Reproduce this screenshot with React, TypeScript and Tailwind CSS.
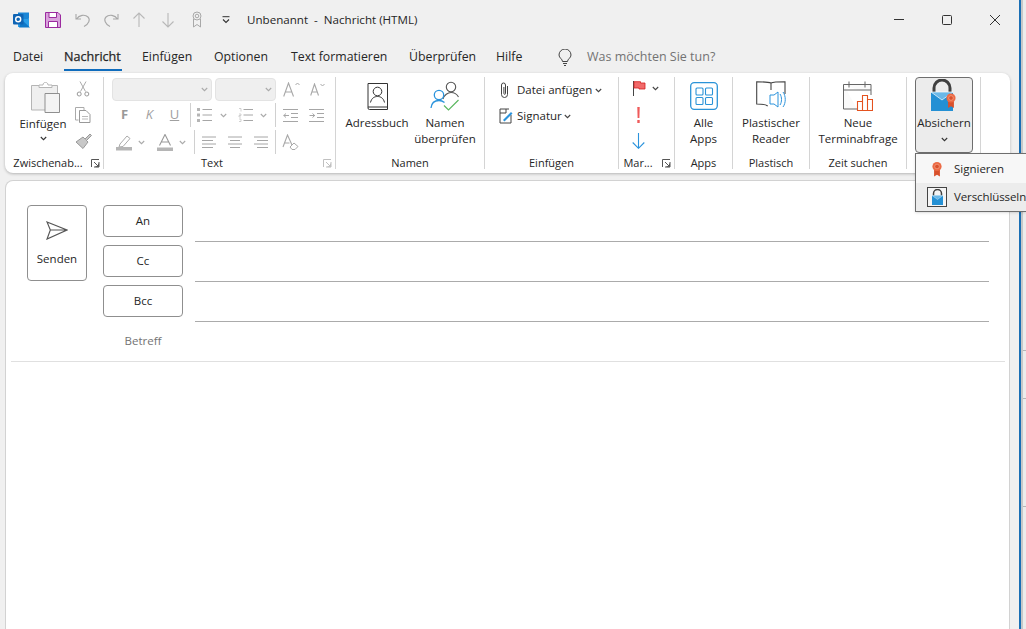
import React from "react";

const G = "#a6a6a6";
const Chev = ({ c = "#444", w = 7 }: { c?: string; w?: number }) => (
  <svg width={w} height="5" viewBox="0 0 7 5" className="shrink-0"><path d="M.8 1l2.700 2.700L6.200 1" fill="none" stroke={c} strokeWidth="1.100" /></svg>
);
const Launcher = ({ c = "#555" }: { c?: string }) => (
  <svg width="9" height="9" viewBox="0 0 9 9" className="shrink-0"><path d="M.5 8V.5H8M8 3v5H3M3 3l4.500 4.500M4.500 7.600h3v-3" fill="none" stroke={c} /></svg>
);
const Sep = ({ h = "h-[24px]" }: { h?: string }) => <div className={`w-px bg-[#d0d0d0] shrink-0 ${h}`} />;

function Outlook() {
  return (
    <svg width="17" height="17" viewBox="0 0 17 17">
      <path d="M5 1.500h11v6L11 12 5 8z" fill="#1a86d6" />
      <path d="M5 8h11v8H5z" fill="#2a9ee8" />
      <path d="M9 9l8 7.500H6z" fill="#0f78c8" />
      <rect x="0" y="3" width="10.500" height="10.500" rx="1" fill="#0f64b4" />
      <circle cx="5.200" cy="8.200" r="2.500" fill="none" stroke="#fff" strokeWidth="1.400" />
    </svg>
  );
}
function TitleIcons() {
  return (
    <div className="flex items-center">
      <div className="ml-[13px] w-[32px]"><Outlook /></div>
      <svg width="16" height="16" viewBox="0 0 16 16" className="mr-[14px]"><path d="M.5.5h12.500l2.500 2.500v12.500H.5z" fill="#d9a2dc" stroke="#9b2a9f" /><path d="M4 1v4.500h7.500V1M3.500 15v-5.500h9V15" fill="#fff" stroke="#9b2a9f" /></svg>
      <svg width="16" height="16" viewBox="0 0 16 16" className="mr-[12px]"><path d="M1 2v5h5M1.500 7C4 3 10 2 13 5c2.500 2.500 1 7-4 9.500" fill="none" stroke="#a8a8a8" strokeWidth="1.100" /></svg>
      <svg width="16" height="16" viewBox="0 0 16 16" className="mr-[13px]"><path d="M15 2v5h-5M14.500 7C12 3 6 2 3 5c-2.500 2.500-1 7 4 9.500" fill="none" stroke="#a8a8a8" strokeWidth="1.100" /></svg>
      <svg width="14" height="16" viewBox="0 0 14 16" className="mr-[15px]"><path d="M7 1v14M1.500 6.500L7 1l5.500 5.500" fill="none" stroke="#b8b8b8" strokeWidth="1.100" /></svg>
      <svg width="14" height="16" viewBox="0 0 14 16" className="mr-[16px]"><path d="M7 15V1M1.500 9.500L7 15l5.500-5.500" fill="none" stroke="#b8b8b8" strokeWidth="1.100" /></svg>
      <svg width="12" height="17" viewBox="0 0 12 17" className="mr-[19px]"><circle cx="6" cy="5" r="4" fill="none" stroke="#a8a8a8" /><circle cx="6" cy="5" r="1.800" fill="none" stroke="#a8a8a8" /><path d="M2.500 8v8L6 13.500 9.500 16V8" fill="none" stroke="#a8a8a8" /></svg>
      <svg width="8" height="8" viewBox="0 0 8 8" className="mr-[17px]"><path d="M.5.700h7" stroke="#333" /><path d="M1 3.500L4 6.500l3-3" fill="none" stroke="#333" strokeWidth="1.100" /></svg>
    </div>
  );
}
const Tab = ({ t, cls, active }: { t: string; cls: string; active?: boolean }) => (
  <div className={`h-[24px] leading-[22px] text-[12.3px] text-[#262626] whitespace-nowrap shrink-0 ${cls}`}>
    {active ? (
      <span className="relative inline-block w-[58px] h-[24px] text-[12.6px] [-webkit-text-stroke:0.25px_#262626]">
        {t}
        <span className="absolute left-0 right-0 bottom-[-1px] h-[2px] bg-[#0f6cbd]" />
      </span>
    ) : t}
  </div>
);
function Group({ w, label, launcher, children, border = true, lc, lab = "" }: { w: string; label: string; launcher?: boolean; children: React.ReactNode; border?: boolean; lc?: string; lab?: string }) {
  return (
    <div className={`${w} shrink-0 h-[92px] flex flex-col relative ${border ? "border-r border-[#d4d4d4]" : ""}`}>
      <div className="flex-1 min-h-0 flex">{children}</div>
      <div className={`h-[14px] leading-[14px] text-[11px] text-[#262626] text-center relative whitespace-nowrap mb-[-1px] ${lab}`}>
        {label}
        {launcher && <div className="absolute right-[3px] top-[3px] flex"><Launcher c={lc} /></div>}
      </div>
    </div>
  );
}
const Big = ({ icon, l1, l2, w }: { icon: React.ReactNode; l1: string; l2?: string; w: string }) => (
  <div className={`${w} flex flex-col items-center shrink-0`}>
    <div className="h-[35px] mt-[1px] flex items-center justify-center">{icon}</div>
    <div className="mt-[2px] text-[11.5px] leading-[16px] text-[#262626] text-center whitespace-nowrap">{l1}{l2 && <><br />{l2}</>}</div>
  </div>
);
const Lines = ({ a = "l" }: { a?: "l" | "c" | "r" }) => {
  const ys = [1, 4.5, 8, 11.5];
  const xs: [number, number][] = a === "l" ? [[0, 14], [0, 11], [0, 14], [0, 11]] : a === "c" ? [[0, 14], [2, 12], [0, 14], [2, 12]] : [[0, 14], [3, 14], [0, 14], [3, 14]];
  return <svg width="14" height="13" viewBox="0 0 14 13">{ys.map((y, i) => <path key={i} d={`M${xs[i][0]} ${y}H${xs[i][1]}`} stroke={G} />)}</svg>;
};
const Bullets = () => <svg width="15" height="14" viewBox="0 0 15 14"><path d="M0 0h3v3H0zM0 5.500h3v3H0zM0 11h3v3H0z" fill="#b5b5b5" /><path d="M5.500 1.500H15M5.500 7H15M5.500 12.500H15" stroke={G} /></svg>;
const Numbered = () => <svg width="15" height="14" viewBox="0 0 15 14"><path d="M1 .5h2v3M1 6h2v1.500H1V9h2M1 11h2v2.500H1" fill="none" stroke="#c0c0c0" strokeWidth=".7" /><path d="M5.500 1.500H15M5.500 7H15M5.500 12.500H15" stroke={G} /></svg>;
const Indent = ({ rev }: { rev?: boolean }) => (
  <svg width="15" height="13" viewBox="0 0 15 13"><path d="M0 .5h15M8 4.500h7M8 8.500h7M0 12.500h15" stroke={G} /><path d={rev ? "M6 6.500H.5m2.500-2l-2.200 2 2.200 2" : "M.5 6.500H6m-2.500-2l2.200 2-2.200 2"} fill="none" stroke={G} /></svg>
);
function Combo({ w }: { w: string }) {
  return <div className={`${w} h-[23px] rounded-[4px] bg-[#efefef] border border-[#e3e3e3] flex items-center justify-end pr-[3px] shrink-0`}><Chev c="#aaa" /></div>;
}
function TextGroup() {
  return (
    <div className="flex flex-col pt-[1px] pl-[8px]">
      <div className="flex items-center h-[23px]">
        <Combo w="w-[100px]" />
        <div className="w-[3px]" />
        <Combo w="w-[61px]" />
        <svg width="17" height="15" viewBox="0 0 17 15" className="ml-[7px]"><path d="M.7 14.500L5.500 1 10.500 14.500M2.500 10h6" fill="none" stroke="#a8a8a8" strokeWidth="1.100" /><path d="M12.500 3L14.500 1l2 2" fill="none" stroke="#a8a8a8" /></svg>
        <svg width="15" height="13" viewBox="0 0 15 13" className="ml-[10px]"><path d="M.7 12.500L4.500 1 8.500 12.500M2 9h5" fill="none" stroke="#a8a8a8" strokeWidth="1.100" /><path d="M10.500 1L12.500 3l2-2" fill="none" stroke="#a8a8a8" /></svg>
      </div>
      <div className="flex items-center h-[26px] mt-[1px]">
        <div className="w-[25px] text-center text-[13px] font-bold text-[#999]">F</div>
        <div className="w-[25px] text-center text-[13px] italic text-[#a0a0a0]">K</div>
        <div className="w-[25px] text-center text-[13px] text-[#a0a0a0] underline">U</div>
        <div className="w-[3px]" /><Sep />
        <div className="ml-[6px] w-[23px]"><Bullets /></div>
        <Chev c="#aaa" />
        <div className="ml-[11px] w-[22px]"><Numbered /></div>
        <Chev c="#aaa" />
        <div className="ml-[8px]"><Sep /></div>
        <div className="ml-[7px]"><Indent rev /></div>
        <div className="ml-[11px]"><Indent /></div>
      </div>
      <div className="flex items-center h-[24px] mt-[2px]">
        <svg width="16" height="17" viewBox="0 0 16 17" className="ml-[4px]"><path d="M4 10l7-8 3 2.500-7 8-4 .5z" fill="none" stroke="#aaa" /><path d="M0 13h16v3.500H0z" fill="#b5b5b5" /></svg>
        <div className="ml-[6px]"><Chev c="#aaa" /></div>
        <svg width="16" height="17" viewBox="0 0 16 17" className="ml-[12px]"><path d="M2.500 11.500L8 0.500 13.500 11.500M4.500 8h7" fill="none" stroke="#999" strokeWidth="1.100" /><path d="M0 13.500h16V17H0z" fill="#b5b5b5" /></svg>
        <div className="ml-[6px]"><Chev c="#aaa" /></div>
        <div className="ml-[8px]"><Sep /></div>
        <div className="ml-[7px]"><Lines a="l" /></div>
        <div className="ml-[12px]"><Lines a="c" /></div>
        <div className="ml-[12px]"><Lines a="r" /></div>
        <div className="ml-[7px]"><Sep /></div>
        <svg width="17" height="17" viewBox="0 0 17 17" className="ml-[6px]"><path d="M1 13L5.500 1 10 11M2.500 9h5" fill="none" stroke="#a8a8a8" strokeWidth="1.100" /><path d="M8 13l4-4 4 3.500-3 3h-3z" fill="none" stroke="#a8a8a8" /></svg>
      </div>
    </div>
  );
}
function Clipboard() {
  return (
    <div className="flex">
      <div className="w-[69px] flex flex-col items-center pt-[5px] pl-[7px] shrink-0">
        <svg width="29" height="31" viewBox="0 0 29 31" className="ml-[4px]"><path d="M.5 3.500h26V28H.5z" fill="#efefef" stroke="#b5b5b5" /><path d="M8 5.500V3h4c0-3.500 5-3.500 5 0h4v2.500z" fill="#fff" stroke="#b5b5b5" /><path d="M14 11.500h14.500V30.500H14z" fill="#f4f4f4" stroke="#8f8f8f" /></svg>
        <div className="mt-[3px] text-[11.5px] leading-[16px] text-[#262626]">Einfügen</div>
        <div className="mt-[4px]"><Chev c="#333" /></div>
      </div>
      <div className="flex flex-col items-center pt-[4px] w-[18px]">
        <svg width="14" height="16" viewBox="0 0 14 16"><path d="M4 .5l5.500 10M10 .5L4.500 10.500" stroke="#aaa" fill="none" /><circle cx="3.200" cy="13" r="2" fill="none" stroke="#999" /><circle cx="10.800" cy="13" r="2" fill="none" stroke="#999" /></svg>
        <svg width="16" height="16" viewBox="0 0 16 16" className="mt-[10px]"><path d="M3.500 13H.5V.5H9V3" fill="none" stroke="#aaa" /><path d="M4.500 3.500H11l4 4v8H4.500z" fill="#fff" stroke="#999" /><path d="M7 9.500h6M7 12h6" stroke="#bbb" /></svg>
        <svg width="17" height="16" viewBox="0 0 17 16" className="mt-[10px]"><path d="M1 9l7-5 5 5-5 6.500z" fill="#c8c8c8" stroke="#999" /><path d="M10 6l5-5 1.500 1.500-5 5" fill="#c8c8c8" stroke="#999" /></svg>
      </div>
    </div>
  );
}
const Lock = ({ h = 32 }: { h?: number }) => (
  <svg width={(h * 22) / 32} height={h} viewBox="0 0 22 32" className="shrink-0">
    <path d="M3 14V9a8 8 0 0 1 16 0v5" fill="none" stroke="#404040" strokeWidth="3" />
    <path d="M0 13h22v19H0z" fill="#2490d4" />
    <path d="M0 13l11 8 11-8z" fill="#6ab8e8" stroke="#fff" strokeWidth=".7" />
  </svg>
);
const Seal = ({ w = 11, h = 16 }: { w?: number; h?: number }) => (
  <svg width={w} height={h} viewBox="0 0 12 18" className="shrink-0"><path d="M2.500 8v10l3.500-2 3.500 2V8z" fill="#d9512c" /><circle cx="6" cy="6" r="5.500" fill="#ec6a44" /><circle cx="6" cy="6" r="2.800" fill="#d9512c" stroke="#f7a88d" strokeWidth=".8" /></svg>
);
function Ribbon() {
  return (
    <div className="mx-[5px] h-[100px] rounded-[8px] bg-white shadow-[0_1px_3px_rgba(0,0,0,0.25)] flex pt-[4px]">
      <Group w="w-[99px]" label="Zwischenab..." launcher lab="pr-[12px]"><Clipboard /></Group>
      <Group w="w-[232px]" label="Text" launcher lc="#c0c0c0" lab="pr-[15px]"><TextGroup /></Group>
      <Group w="w-[149px]" label="Namen">
        <div className="flex pl-[5px]">
          <Big w="w-[72px]" icon={
            <svg width="21" height="28" viewBox="0 0 21 28"><path d="M1 25V1.500h19.500v26H2.500A1.500 1.500 0 0 1 1 26V25h19.500" fill="none" stroke="#333" /><circle cx="10.500" cy="9.500" r="4.300" fill="none" stroke="#333" /><path d="M3.500 20.500c1-4.500 4-6 7-6s6 1.500 7 6" fill="none" stroke="#333" /></svg>
          } l1="Adressbuch" />
          <Big w="w-[64px]" icon={
            <svg width="30" height="30" viewBox="0 0 30 30"><circle cx="21" cy="6" r="4.700" fill="none" stroke="#555" strokeWidth="1.100" /><path d="M13 18c1-4 5-6.500 8-6.500s6 1.800 7.500 4.500" fill="none" stroke="#555" strokeWidth="1.100" /><circle cx="9" cy="14" r="4.700" fill="none" stroke="#2b93dc" strokeWidth="1.300" /><path d="M1 27c.5-5 4-7.500 8-7.500 2.500 0 4 .8 5.500 2" fill="none" stroke="#2b93dc" strokeWidth="1.300" /><path d="M14 24.500l4.500 4.500 10-10" fill="none" stroke="#5cb860" strokeWidth="1.200" /></svg>
          } l1="Namen" l2="überprüfen" />
        </div>
      </Group>
      <Group w="w-[134px]" label="Einfügen">
        <div className="flex flex-col pl-[14px] pt-[1px] text-[11.5px] text-[#262626]">
          <div className="flex items-center h-[24px]">
            <svg width="11" height="17" viewBox="0 0 11 17" className="mr-[7px]"><path d="M8.500 4v8.500a3 3 0 0 1-6 0V3a2 2 0 0 1 4 0v8.500a.8.8 0 0 1-1.600 0V5" fill="none" stroke="#444" /></svg>
            <span className="mr-[3px]">Datei anfügen</span><Chev />
          </div>
          <div className="flex items-center h-[24px] mt-[2px]">
            <svg width="14" height="16" viewBox="0 0 14 16" className="mr-[4px]"><path d="M10 1H1v14h11V7M7 1v4H1" fill="none" stroke="#444" /><path d="M4 12l8-8 1.500 1.500-8 8z" fill="#2b93dc" /></svg>
            <span className="mr-[2px]">Signatur</span><Chev />
          </div>
        </div>
      </Group>
      <Group w="w-[56px]" label="Mar..." launcher lab="pr-[17px]">
        <div className="flex flex-col pl-[14px] pt-[1px] items-start">
          <div className="flex items-center h-[20px]">
            <svg width="13" height="15" viewBox="0 0 13 15"><path d="M.5 0v15" stroke="#444" /><path d="M1 .7h6.500V2H12v6H6V7H1z" fill="#f16a6a" stroke="#d42020" strokeWidth=".8" /></svg>
            <div className="ml-[6px]"><Chev /></div>
          </div>
          <div className="h-[27px] mt-[3px] ml-[4px] flex items-center"><svg width="3" height="16" viewBox="0 0 3 16"><path d="M.3 0h2.400l-.3 11H.6zM.3 13h2.400v3H.3z" fill="#ef5a5a" /></svg></div>
          <div className="h-[26px] flex items-center ml-[-1px]"><svg width="13" height="16" viewBox="0 0 13 16"><path d="M6.500 0v15M.7 9.500l5.800 5.800 5.800-5.800" fill="none" stroke="#2b93dc" strokeWidth="1.100" /></svg></div>
        </div>
      </Group>
      <Group w="w-[58px]" label="Apps">
        <Big w="w-[57px]" icon={
          <svg width="28" height="28" viewBox="0 0 28 28"><rect x=".7" y=".7" width="26.600" height="26.600" rx="3.500" fill="none" stroke="#2a93d8" strokeWidth="1.300" /><rect x="6" y="6" width="7" height="7" rx="1" fill="none" stroke="#2a93d8" strokeWidth="1.100" /><rect x="15.500" y="6" width="7" height="7" rx="1" fill="none" stroke="#2a93d8" strokeWidth="1.100" /><rect x="6" y="15.500" width="7" height="7" rx="1" fill="none" stroke="#2a93d8" strokeWidth="1.100" /><rect x="15.500" y="15.500" width="7" height="7" rx="1" fill="none" stroke="#2a93d8" strokeWidth="1.100" /></svg>
        } l1="Alle" l2="Apps" />
      </Group>
      <Group w="w-[77px]" label="Plastisch">
        <Big w="w-[76px]" icon={
          <svg width="31" height="30" viewBox="0 0 31 30"><path d="M15 2C13 1 9 .8.7.8V23c5 0 9 .2 11 2M15 2c2-1 4-1.200 14-1.200V13M15 2v7" fill="none" stroke="#444" strokeWidth="1.100" /><path d="M14 14h4l4-3v15l-4-3h-4z" fill="#fff" stroke="#2b93dc" /><path d="M24 13c2 3 2 8 0 11M27 11c3 4 3 11 0 15" fill="none" stroke="#2b93dc" /></svg>
        } l1="Plastischer" l2="Reader" />
      </Group>
      <Group w="w-[97px]" label="Zeit suchen">
        <Big w="w-[96px]" icon={
          <svg width="30" height="30" viewBox="0 0 30 30"><path d="M.5 3.500h27.500V14M.5 3.500V28H14" fill="#fafafa" stroke="#666" /><path d="M.5 9h27.500M6 .5v6M22 .5v6" stroke="#666" /><path d="M14.500 29.500v-9H19.500v9zM19.500 29.500V14.500h5v15zM24.500 29.500v-11h5v11z" fill="#fff" stroke="#e4521f" strokeWidth="1.100" /></svg>
        } l1="Neue" l2="Terminabfrage" />
      </Group>
      <div className="w-[74px] h-[92px] shrink-0 border-r border-[#d4d4d4] pl-[8px]">
        <div className="w-[58px] h-[76px] rounded-[4px] bg-[#ececec] border border-[#6e6e6e] flex flex-col items-center">
          <div className="relative h-[33px] mt-[1px] w-[32px] flex justify-center pr-[5px]">
            <Lock />
            <div className="absolute left-[18px] top-[14px]"><Seal w={10} h={15} /></div>
          </div>
          <div className="text-[11.5px] leading-[16px] text-[#262626] mt-[3px]">Absichern</div>
          <div className="mt-[6px]"><Chev c="#333" /></div>
        </div>
      </div>
    </div>
  );
}
function SecureMenu() {
  return (
    <div className="absolute left-[915px] top-[153px] w-[111px] h-[59px] bg-[#f7f7f7] border border-[#6e6e6e] border-r-0 shadow-sm pt-[1px] text-[11.5px] text-[#262626] overflow-hidden">
      <div className="h-[28px] flex items-center pl-[16px]"><Seal w={10} h={16} /><span className="ml-[12px]">Signieren</span></div>
      <div className="h-[28px] flex items-center pl-[11px] bg-[#ececec]">
        <div className="w-[20px] h-[20px] border border-[#444] flex items-center justify-center bg-[#f5f5f5] shrink-0"><Lock h={16} /></div>
        <span className="ml-[7px] whitespace-nowrap tracking-[-0.1px]">Verschlüsseln</span>
      </div>
    </div>
  );
}
const AddrBtn = ({ t }: { t: string }) => (
  <div className="h-[32px] w-[80px] rounded-[4px] border border-[#8f8f8f] flex items-center justify-center text-[11.5px] text-[#262626]">{t}</div>
);
function Compose() {
  return (
    <div className="mx-[5px] mt-[7px] flex-1 rounded-t-[8px] bg-white border-t border-l border-r border-[#d2d2d2] pl-[5px] pr-[4px] flex flex-col">
      <div className="h-[181px] border-b border-[#e0e0e0] flex pt-[24px] pl-[16px] shrink-0">
        <div className="w-[60px] h-[76px] rounded-[4px] border border-[#8f8f8f] flex flex-col items-center shrink-0">
          <svg width="22" height="19" viewBox="0 0 23 20" className="mt-[15px]"><path d="M1 1l21 8.500L1 19l3.500-9.500zM4.500 9.500H22" fill="none" stroke="#555" strokeWidth="1.200" /></svg>
          <div className="mt-[11px] text-[11.5px] leading-[16px] text-[#262626]">Senden</div>
        </div>
        <div className="ml-[16px] w-[80px] flex flex-col gap-[8px] shrink-0">
          <AddrBtn t="An" /><AddrBtn t="Cc" /><AddrBtn t="Bcc" />
          <div className="text-[11.5px] leading-[16px] text-center text-[#737373] mt-[8px]">Betreff</div>
        </div>
        <div className="ml-[12px] w-[794px] flex flex-col shrink-0">
          <div className="h-[37px] border-b border-[#ababab]" />
          <div className="h-[40px] border-b border-[#ababab]" />
          <div className="h-[40px] border-b border-[#ababab]" />
        </div>
      </div>
    </div>
  );
}
export default function App() {
  return (
    <div className="w-[1026px] h-[629px] overflow-hidden flex relative bg-[#f0f0f0] [font-family:'Open_Sans','Noto_Sans',sans-serif]">
      <div className="w-[1021px] shrink-0 border-r-2 border-[#1a6fb5] flex flex-col pr-[4px]">
        <div className="h-[39px] flex items-center shrink-0">
          <TitleIcons />
          <div className="text-[11.6px] text-[#262626] whitespace-pre">Unbenannt  -  Nachricht (HTML)</div>
          <div className="ml-auto flex items-center pr-[15px]">
            <div className="w-[10px] h-px bg-[#333] mr-[38px]" />
            <div className="w-[10px] h-[10px] border border-[#333] rounded-[1.5px] mr-[38px]" />
            <svg width="10" height="10" viewBox="0 0 10 10"><path d="M0 0l10 10M10 0L0 10" stroke="#333" /></svg>
          </div>
        </div>
        <div className="h-[31px] pt-[7px] flex items-start shrink-0 pl-[13px]">
          <Tab t="Datei" cls="w-[51px]" />
          <Tab t="Nachricht" cls="w-[78px]" active />
          <Tab t="Einfügen" cls="w-[72px]" />
          <Tab t="Optionen" cls="w-[77px]" />
          <Tab t="Text formatieren" cls="w-[118px]" />
          <Tab t="Überprüfen" cls="w-[87px]" />
          <Tab t="Hilfe" cls="w-[62px]" />
          <svg width="14" height="17" viewBox="0 0 14 17" className="mr-[15px] mt-[3px] shrink-0"><path d="M4.500 12.500c0-2.500-3.500-3.500-3.500-6.500a6 6 0 0 1 12 0c0 3-3.500 4-3.500 6.500zM5 14.500h4M6 16.500h2" fill="none" stroke="#444" /></svg>
          <div className="text-[12.5px] leading-[22px] text-[#737373] whitespace-nowrap">Was möchten Sie tun?</div>
        </div>
        <div className="h-[3px] shrink-0" />
        <Ribbon />
        <Compose />
      </div>
      <div className="flex-1 flex flex-col bg-[#ececec] border-l-[2px] border-[#c8c8c8] w-[3px]">
        <div className="h-[351px] border-b border-[#b5b5b5]" />
        <div className="h-[48px] border-b border-[#b5b5b5]" />
        <div className="h-[108px] border-b border-[#b5b5b5]" />
      </div>
      <SecureMenu />
    </div>
  );
}
